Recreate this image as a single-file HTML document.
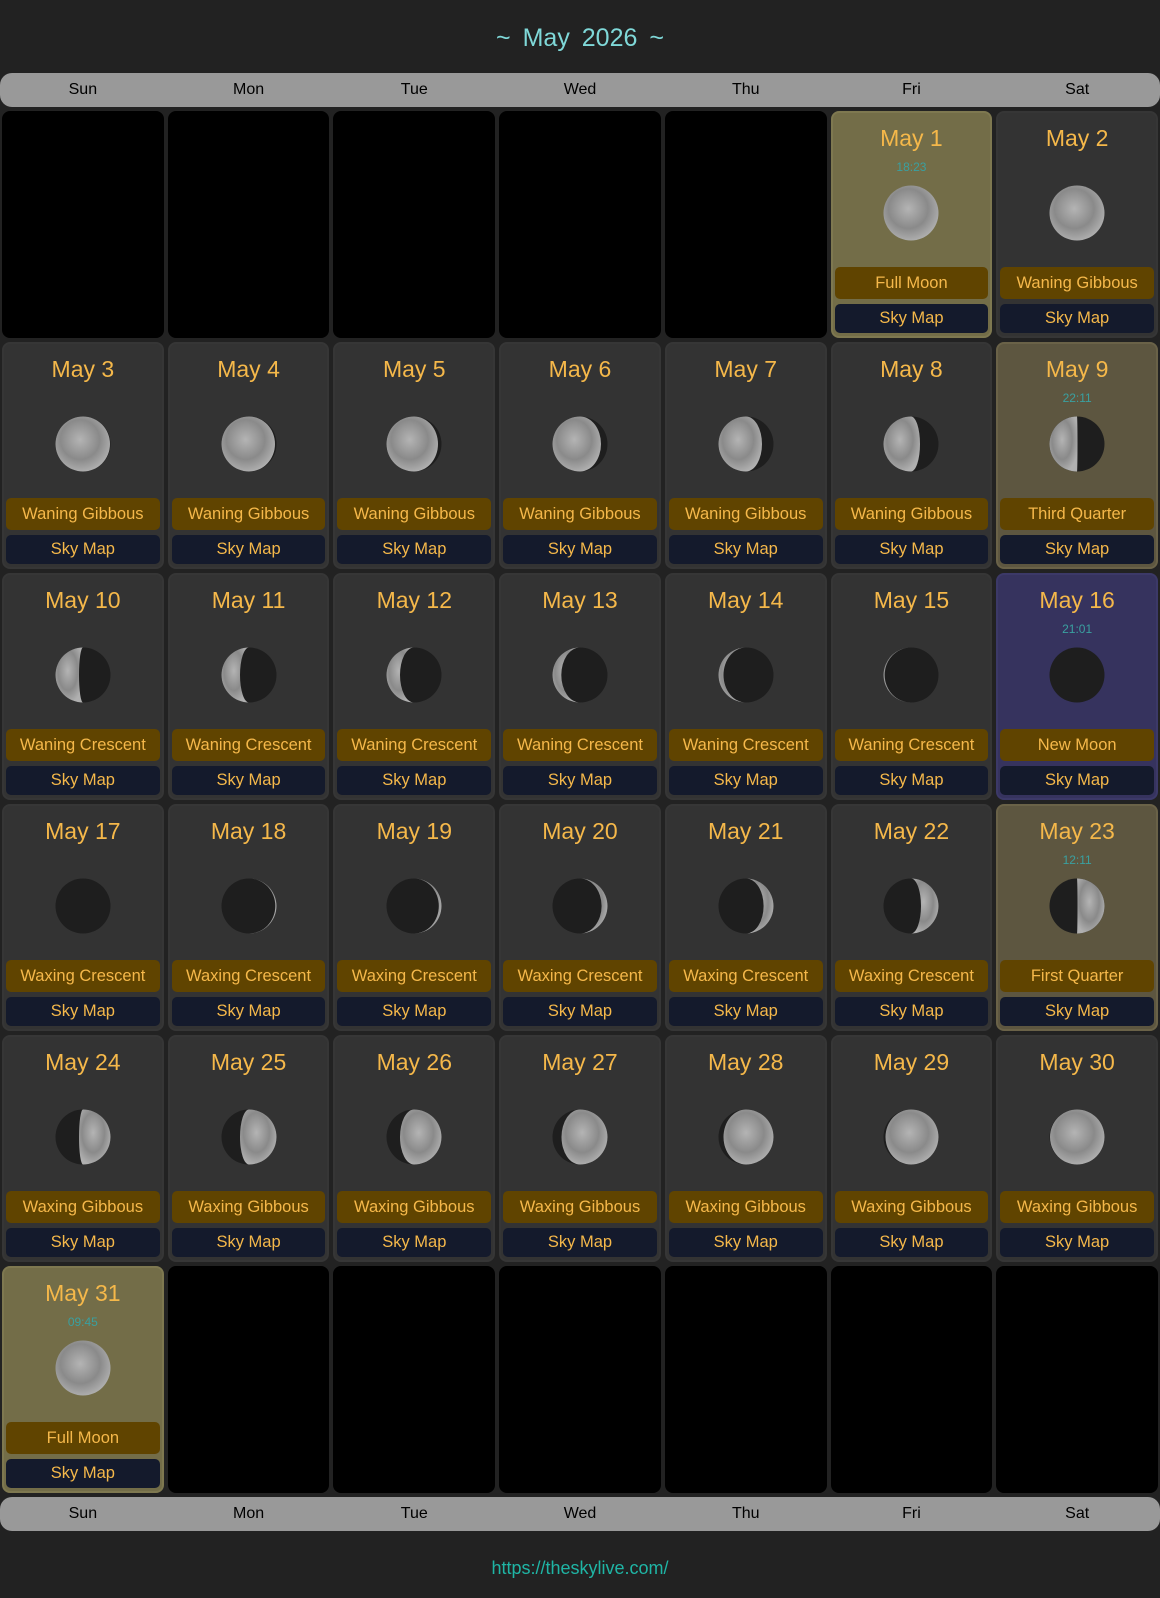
<!DOCTYPE html>
<html><head><meta charset="utf-8">
<style>
*{box-sizing:border-box;margin:0;padding:0}
body{width:1160px;height:1598px;background:#222;font-family:"Liberation Sans",sans-serif;position:relative;overflow:hidden}
.title{position:absolute;top:21px;left:0;width:1160px;text-align:center;color:#7fd8d8;font-size:25px;line-height:34px;word-spacing:5px}
.bar{position:absolute;left:0;width:1160px;height:34px;background:#999;border-radius:12px;display:flex}
.bar div{flex:1;text-align:center;font-size:16px;line-height:34px;color:#000}
.grid{position:absolute;left:0;top:111px;width:1160px;display:grid;grid-template-columns:repeat(7,1fr);grid-auto-rows:227px;row-gap:4px}
.c{margin:0 2px;border-radius:8px;background:#333;position:relative;border:2px solid #363636}
.e{background:#000;border-color:#000}
.f{background:#736d48;border-color:#7e7850}
.q{background:#5d5640;border-color:#6a6248}
.n{background:#36335e;border-color:#3c3968}
.d{position:absolute;top:10px;left:0;right:0;text-align:center;color:#f5b84a;font-size:23px;line-height:30px}
.t{position:absolute;top:46px;left:0;right:0;text-align:center;color:#3aa0a0;font-size:12px;line-height:16px}
.c svg{position:absolute;top:72px;left:50%;margin-left:-28px}
.p{position:absolute;top:154px;left:2px;right:2px;height:32px;background:#604400;border-radius:5px;color:#f5b84a;font-size:16.5px;line-height:32px;text-align:center}
.s{position:absolute;top:191px;left:2px;right:2px;height:29px;background:#141a2c;border-radius:5px;color:#f5b84a;font-size:16.5px;line-height:29px;text-align:center}
.link{position:absolute;top:1556px;left:0;width:1160px;text-align:center;color:#1fb5a5;font-size:18px;line-height:24px}
</style></head><body>
<svg width="0" height="0" style="position:absolute"><defs><radialGradient id="lit" cx="45%" cy="42%" r="60%"><stop offset="0" stop-color="#b4b4b4"/><stop offset="0.6" stop-color="#8a8a8a"/><stop offset="1" stop-color="#b0b0b0"/></radialGradient></defs></svg>
<div class="title">~ May 2026 ~</div>
<div class="bar" style="top:73px"><div>Sun</div><div>Mon</div><div>Tue</div><div>Wed</div><div>Thu</div><div>Fri</div><div>Sat</div></div>
<div class="grid">
<div class="c e"></div><div class="c e"></div><div class="c e"></div><div class="c e"></div><div class="c e"></div>
<div class="c f"><div class="d">May 1</div><div class="t">18:23</div><svg width="56" height="56"><circle cx="28" cy="28" r="27.5" fill="url(#lit)"/></svg><div class="p">Full Moon</div><div class="s">Sky Map</div></div>
<div class="c"><div class="d">May 2</div><svg width="56" height="56"><circle cx="28" cy="28" r="27.5" fill="url(#lit)"/></svg><div class="p">Waning Gibbous</div><div class="s">Sky Map</div></div>

<div class="c"><div class="d">May 3</div><svg width="56" height="56"><circle cx="28" cy="28" r="27.5" fill="#1e1e1e"/><path d="M28,0.5A27.5,27.5 0 0 0 28,55.5A27,27.5 0 0 0 28,0.5" fill="url(#lit)"/></svg><div class="p">Waning Gibbous</div><div class="s">Sky Map</div></div>
<div class="c"><div class="d">May 4</div><svg width="56" height="56"><circle cx="28" cy="28" r="27.5" fill="#1e1e1e"/><path d="M28,0.5A27.5,27.5 0 0 0 28,55.5A26,27.5 0 0 0 28,0.5" fill="url(#lit)"/></svg><div class="p">Waning Gibbous</div><div class="s">Sky Map</div></div>
<div class="c"><div class="d">May 5</div><svg width="56" height="56"><circle cx="28" cy="28" r="27.5" fill="#1e1e1e"/><path d="M28,0.5A27.5,27.5 0 0 0 28,55.5A24,27.5 0 0 0 28,0.5" fill="url(#lit)"/></svg><div class="p">Waning Gibbous</div><div class="s">Sky Map</div></div>
<div class="c"><div class="d">May 6</div><svg width="56" height="56"><circle cx="28" cy="28" r="27.5" fill="#1e1e1e"/><path d="M28,0.5A27.5,27.5 0 0 0 28,55.5A21,27.5 0 0 0 28,0.5" fill="url(#lit)"/></svg><div class="p">Waning Gibbous</div><div class="s">Sky Map</div></div>
<div class="c"><div class="d">May 7</div><svg width="56" height="56"><circle cx="28" cy="28" r="27.5" fill="#1e1e1e"/><path d="M28,0.5A27.5,27.5 0 0 0 28,55.5A16,27.5 0 0 0 28,0.5" fill="url(#lit)"/></svg><div class="p">Waning Gibbous</div><div class="s">Sky Map</div></div>
<div class="c"><div class="d">May 8</div><svg width="56" height="56"><circle cx="28" cy="28" r="27.5" fill="#1e1e1e"/><path d="M28,0.5A27.5,27.5 0 0 0 28,55.5A9,27.5 0 0 0 28,0.5" fill="url(#lit)"/></svg><div class="p">Waning Gibbous</div><div class="s">Sky Map</div></div>
<div class="c q"><div class="d">May 9</div><div class="t">22:11</div><svg width="56" height="56"><circle cx="28" cy="28" r="27.5" fill="#1e1e1e"/><path d="M28,0.5A27.5,27.5 0 0 0 28,55.5A0.5,27.5 0 0 0 28,0.5" fill="url(#lit)"/></svg><div class="p">Third Quarter</div><div class="s">Sky Map</div></div>

<div class="c"><div class="d">May 10</div><svg width="56" height="56"><circle cx="28" cy="28" r="27.5" fill="#1e1e1e"/><path d="M28,0.5A27.5,27.5 0 0 0 28,55.5A4,27.5 0 0 1 28,0.5" fill="url(#lit)"/></svg><div class="p">Waning Crescent</div><div class="s">Sky Map</div></div>
<div class="c"><div class="d">May 11</div><svg width="56" height="56"><circle cx="28" cy="28" r="27.5" fill="#1e1e1e"/><path d="M28,0.5A27.5,27.5 0 0 0 28,55.5A9,27.5 0 0 1 28,0.5" fill="url(#lit)"/></svg><div class="p">Waning Crescent</div><div class="s">Sky Map</div></div>
<div class="c"><div class="d">May 12</div><svg width="56" height="56"><circle cx="28" cy="28" r="27.5" fill="#1e1e1e"/><path d="M28,0.5A27.5,27.5 0 0 0 28,55.5A14,27.5 0 0 1 28,0.5" fill="url(#lit)"/></svg><div class="p">Waning Crescent</div><div class="s">Sky Map</div></div>
<div class="c"><div class="d">May 13</div><svg width="56" height="56"><circle cx="28" cy="28" r="27.5" fill="#1e1e1e"/><path d="M28,0.5A27.5,27.5 0 0 0 28,55.5A18.7,27.5 0 0 1 28,0.5" fill="url(#lit)"/></svg><div class="p">Waning Crescent</div><div class="s">Sky Map</div></div>
<div class="c"><div class="d">May 14</div><svg width="56" height="56"><circle cx="28" cy="28" r="27.5" fill="#1e1e1e"/><path d="M28,0.5A27.5,27.5 0 0 0 28,55.5A22.5,27.5 0 0 1 28,0.5" fill="url(#lit)"/></svg><div class="p">Waning Crescent</div><div class="s">Sky Map</div></div>
<div class="c"><div class="d">May 15</div><svg width="56" height="56"><circle cx="28" cy="28" r="27.5" fill="#1e1e1e"/><path d="M28,0.5A27.5,27.5 0 0 0 28,55.5A26.3,27.5 0 0 1 28,0.5" fill="url(#lit)"/></svg><div class="p">Waning Crescent</div><div class="s">Sky Map</div></div>
<div class="c n"><div class="d">May 16</div><div class="t">21:01</div><svg width="56" height="56"><circle cx="28" cy="28" r="27.5" fill="#1e1e1e"/></svg><div class="p">New Moon</div><div class="s">Sky Map</div></div>

<div class="c"><div class="d">May 17</div><svg width="56" height="56"><circle cx="28" cy="28" r="27.5" fill="#1e1e1e"/></svg><div class="p">Waxing Crescent</div><div class="s">Sky Map</div></div>
<div class="c"><div class="d">May 18</div><svg width="56" height="56"><circle cx="28" cy="28" r="27.5" fill="#1e1e1e"/><path d="M28,0.5A27.5,27.5 0 0 1 28,55.5A26.3,27.5 0 0 0 28,0.5" fill="url(#lit)"/></svg><div class="p">Waxing Crescent</div><div class="s">Sky Map</div></div>
<div class="c"><div class="d">May 19</div><svg width="56" height="56"><circle cx="28" cy="28" r="27.5" fill="#1e1e1e"/><path d="M28,0.5A27.5,27.5 0 0 1 28,55.5A24.8,27.5 0 0 0 28,0.5" fill="url(#lit)"/></svg><div class="p">Waxing Crescent</div><div class="s">Sky Map</div></div>
<div class="c"><div class="d">May 20</div><svg width="56" height="56"><circle cx="28" cy="28" r="27.5" fill="#1e1e1e"/><path d="M28,0.5A27.5,27.5 0 0 1 28,55.5A21.6,27.5 0 0 0 28,0.5" fill="url(#lit)"/></svg><div class="p">Waxing Crescent</div><div class="s">Sky Map</div></div>
<div class="c"><div class="d">May 21</div><svg width="56" height="56"><circle cx="28" cy="28" r="27.5" fill="#1e1e1e"/><path d="M28,0.5A27.5,27.5 0 0 1 28,55.5A17.6,27.5 0 0 0 28,0.5" fill="url(#lit)"/></svg><div class="p">Waxing Crescent</div><div class="s">Sky Map</div></div>
<div class="c"><div class="d">May 22</div><svg width="56" height="56"><circle cx="28" cy="28" r="27.5" fill="#1e1e1e"/><path d="M28,0.5A27.5,27.5 0 0 1 28,55.5A10,27.5 0 0 0 28,0.5" fill="url(#lit)"/></svg><div class="p">Waxing Crescent</div><div class="s">Sky Map</div></div>
<div class="c q"><div class="d">May 23</div><div class="t">12:11</div><svg width="56" height="56"><circle cx="28" cy="28" r="27.5" fill="#1e1e1e"/><path d="M28,0.5A27.5,27.5 0 0 1 28,55.5A0.5,27.5 0 0 0 28,0.5" fill="url(#lit)"/></svg><div class="p">First Quarter</div><div class="s">Sky Map</div></div>

<div class="c"><div class="d">May 24</div><svg width="56" height="56"><circle cx="28" cy="28" r="27.5" fill="#1e1e1e"/><path d="M28,0.5A27.5,27.5 0 0 1 28,55.5A4,27.5 0 0 1 28,0.5" fill="url(#lit)"/></svg><div class="p">Waxing Gibbous</div><div class="s">Sky Map</div></div>
<div class="c"><div class="d">May 25</div><svg width="56" height="56"><circle cx="28" cy="28" r="27.5" fill="#1e1e1e"/><path d="M28,0.5A27.5,27.5 0 0 1 28,55.5A9,27.5 0 0 1 28,0.5" fill="url(#lit)"/></svg><div class="p">Waxing Gibbous</div><div class="s">Sky Map</div></div>
<div class="c"><div class="d">May 26</div><svg width="56" height="56"><circle cx="28" cy="28" r="27.5" fill="#1e1e1e"/><path d="M28,0.5A27.5,27.5 0 0 1 28,55.5A14,27.5 0 0 1 28,0.5" fill="url(#lit)"/></svg><div class="p">Waxing Gibbous</div><div class="s">Sky Map</div></div>
<div class="c"><div class="d">May 27</div><svg width="56" height="56"><circle cx="28" cy="28" r="27.5" fill="#1e1e1e"/><path d="M28,0.5A27.5,27.5 0 0 1 28,55.5A18.5,27.5 0 0 1 28,0.5" fill="url(#lit)"/></svg><div class="p">Waxing Gibbous</div><div class="s">Sky Map</div></div>
<div class="c"><div class="d">May 28</div><svg width="56" height="56"><circle cx="28" cy="28" r="27.5" fill="#1e1e1e"/><path d="M28,0.5A27.5,27.5 0 0 1 28,55.5A22.5,27.5 0 0 1 28,0.5" fill="url(#lit)"/></svg><div class="p">Waxing Gibbous</div><div class="s">Sky Map</div></div>
<div class="c"><div class="d">May 29</div><svg width="56" height="56"><circle cx="28" cy="28" r="27.5" fill="#1e1e1e"/><path d="M28,0.5A27.5,27.5 0 0 1 28,55.5A25.5,27.5 0 0 1 28,0.5" fill="url(#lit)"/></svg><div class="p">Waxing Gibbous</div><div class="s">Sky Map</div></div>
<div class="c"><div class="d">May 30</div><svg width="56" height="56"><circle cx="28" cy="28" r="27.5" fill="#1e1e1e"/><path d="M28,0.5A27.5,27.5 0 0 1 28,55.5A27,27.5 0 0 1 28,0.5" fill="url(#lit)"/></svg><div class="p">Waxing Gibbous</div><div class="s">Sky Map</div></div>

<div class="c f"><div class="d">May 31</div><div class="t">09:45</div><svg width="56" height="56"><circle cx="28" cy="28" r="27.5" fill="url(#lit)"/></svg><div class="p">Full Moon</div><div class="s">Sky Map</div></div>
<div class="c e"></div><div class="c e"></div><div class="c e"></div><div class="c e"></div><div class="c e"></div><div class="c e"></div>
</div>
<div class="bar" style="top:1497px"><div>Sun</div><div>Mon</div><div>Tue</div><div>Wed</div><div>Thu</div><div>Fri</div><div>Sat</div></div>
<div class="link">https://theskylive.com/</div>
</body></html>
